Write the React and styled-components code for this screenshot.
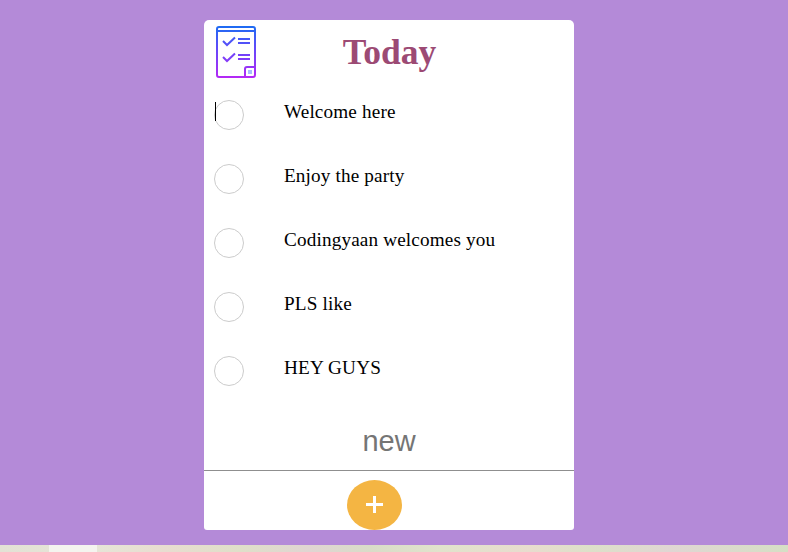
import React from "react";
import styled, { createGlobalStyle } from "styled-components";

const GlobalStyle = createGlobalStyle`
  * { box-sizing: border-box; }
  body { margin: 0; overflow: hidden; background: #b48ad8; }
`;

const Page = styled.div`
  height: 552px;
  display: flex;
  flex-direction: column;
  background: #b48ad8;
  font-family: "Liberation Serif", "Times New Roman", serif;
`;

const Stage = styled.main`
  flex: 1;
  padding: 20px 214px 0 204px;
`;

const Card = styled.section`
  height: 510px;
  display: flex;
  flex-direction: column;
  background: #fff;
  border-radius: 5px 5px 3px 3px;
`;

const Header = styled.header`
  height: 70px;
  display: grid;
  grid-template-columns: 64px 1fr 64px;
  align-items: start;
`;

const ListIcon = styled.svg`
  width: 40px;
  height: 52px;
  margin: 6px 0 0 12px;
`;

const Title = styled.h1`
  margin: 12px 0 0;
  padding-left: 1px;
  text-align: center;
  font-size: 35.5px;
  line-height: 41px;
  font-weight: 700;
  color: #9c4a74;
`;

const List = styled.ul`
  height: 320px;
  margin: 0;
  padding: 0;
  list-style: none;
`;

const Item = styled.li`
  position: relative;
  height: 64px;
  padding: 10px 10px 0;
  display: flex;
  gap: 40px;
`;

const Check = styled.button`
  width: 30px;
  height: 30px;
  padding: 0;
  border: 1px solid #ccc;
  border-radius: 50%;
  background: #fff;
`;

const Caret = styled.span`
  position: absolute;
  left: 11px;
  top: 12px;
  width: 1px;
  height: 19px;
  background: #000;
`;

const Label = styled.span`
  font-size: 19.2px;
  line-height: 24px;
  letter-spacing: 0.15px;
  color: #000;
`;

const NewItem = styled.div`
  height: 61px;
  padding-top: 14px;
  border-bottom: 1px solid #8f8f8f;
  text-align: center;
  font-family: "Liberation Sans", Arial, sans-serif;
  font-size: 29px;
  line-height: 34px;
  color: #757575;
`;

const AddButton = styled.button`
  width: 55px;
  height: 50px;
  margin: 9px 0 0 143px;
  padding: 0 0 1px;
  display: flex;
  align-items: center;
  justify-content: center;
  border: 0;
  border-radius: 50%;
  background: #f4b543;
`;

const BottomStrip = styled.footer`
  height: 7px;
  display: flex;
  background: linear-gradient(90deg, #e3e2d5 0, #e6e5d7 97px, #e8ddd0 165px, #dfdfc9 240px, #e0d5d2 310px, #d9dcc8 370px, #e1e3cc 440px, #e8dcce 530px, #dde0c9 590px, #e0d6d3 670px, #d6dfc5 788px);
`;

const Highlight = styled.div`
  width: 48px;
  height: 7px;
  margin-left: 49px;
  background: #f4f4ef;
`;

const tasks = ["Welcome here", "Enjoy the party", "Codingyaan welcomes you", "PLS like", "HEY GUYS"];

function ChecklistIcon() {
  return (
    <ListIcon viewBox="0 0 40 52" fill="none" aria-hidden="true">
      <defs>
        <linearGradient id="ink" gradientUnits="userSpaceOnUse" x1="0" y1="0" x2="0" y2="52">
          <stop offset="0" stopColor="#1d6cf2" />
          <stop offset="0.45" stopColor="#6547fa" />
          <stop offset="1" stopColor="#b528f5" />
        </linearGradient>
      </defs>
      <g stroke="url(#ink)" strokeWidth="2">
        <path d="M29 51H3a2 2 0 0 1-2-2V3a2 2 0 0 1 2-2h34a2 2 0 0 1 2 2v46a2 2 0 0 1-2 2h-8v-8a2 2 0 0 1 2-2h8" />
        <path d="M1 4.99L39 5" />
        <path d="M7 15l4 4 8-7.5M7 31l4 4 8-7.5" />
        <path d="M22 12.99L34 13M22 16.99L34 17M22 28.99L34 29M22 32.99L34 33" />
      </g>
      <path fill="#a6bdff" d="M32 44h4v4h-4z" />
    </ListIcon>
  );
}

export default function App() {
  return (
    <>
      <GlobalStyle />
      <Page>
        <Stage>
          <Card>
            <Header>
              <ChecklistIcon />
              <Title>Today</Title>
            </Header>
            <List>
              {tasks.map((task, i) => (
                <Item key={task}>
                  <Check aria-label={task} />
                  <Label>{task}</Label>
                  {i === 0 && <Caret />}
                </Item>
              ))}
            </List>
            <NewItem>new</NewItem>
            <AddButton aria-label="Add">
              <svg width="17" height="17" viewBox="0 0 17 17" aria-hidden="true">
                <path d="M7 0h3v7h7v3h-7v7H7v-7H0V7h7z" fill="#fff" />
              </svg>
            </AddButton>
          </Card>
        </Stage>
        <BottomStrip>
          <Highlight />
        </BottomStrip>
      </Page>
    </>
  );
}
